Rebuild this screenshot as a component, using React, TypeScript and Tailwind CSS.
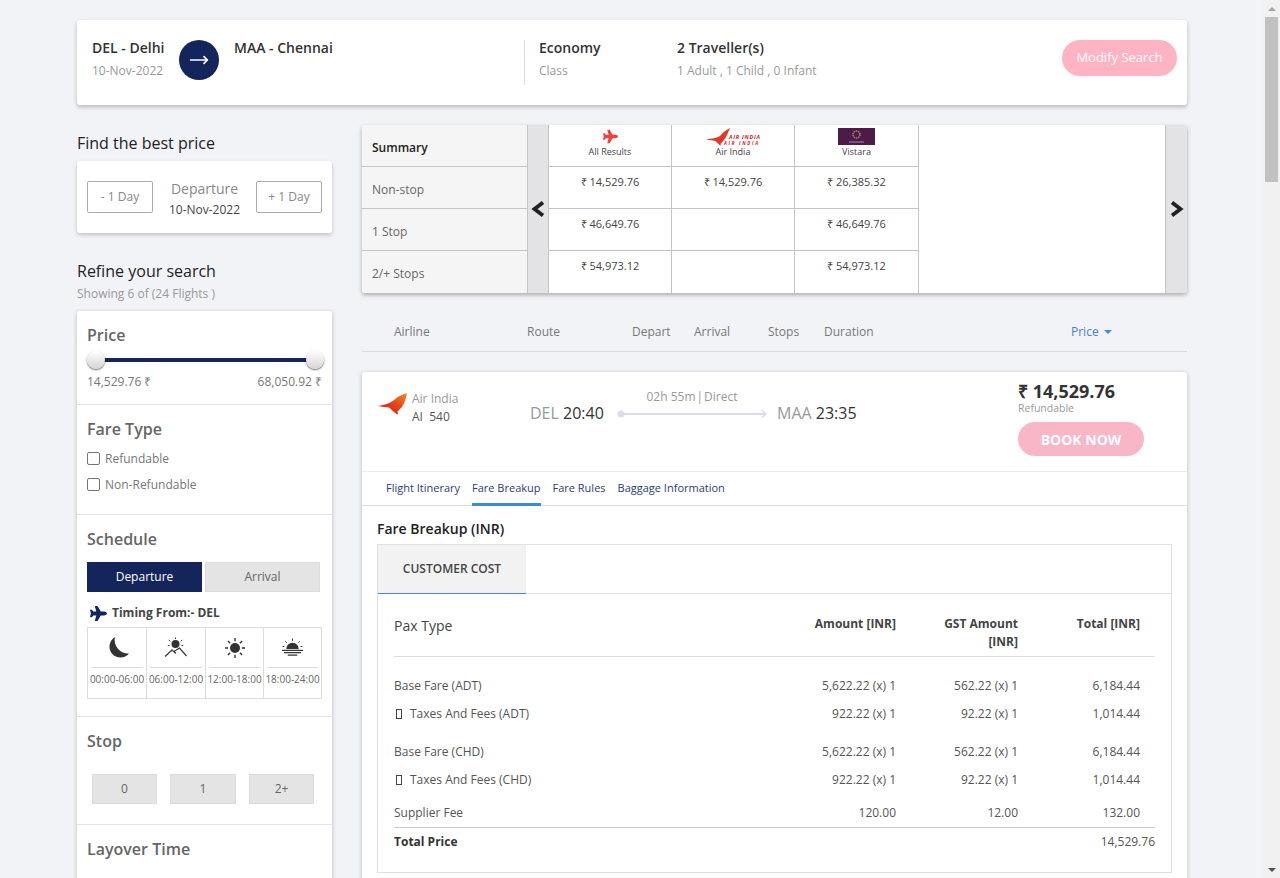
import { MoveRight } from "lucide-react";
import { FaPlane } from "react-icons/fa";

const NAVY = "#13255a";

// logos and small drawings
function SwooshLogo({ className }: { className?: string }) {
  return (
    <svg viewBox="0 0 30 22" className={className}>
      <defs>
        <linearGradient id="swoosh" x1="0" y1="1" x2="1" y2="0">
          <stop offset="0" stopColor="#d2141e" />
          <stop offset="0.55" stopColor="#e8431a" />
          <stop offset="1" stopColor="#f58a1f" />
        </linearGradient>
      </defs>
      <path
        d="M30 0C25 1.500 21 3 17 6.500C13 10 7 12 0 13C4 14 9 14 12 15L15 18L19.500 21.500C20.500 22 21 21 20.500 20C20 19.500 20 18.500 21 18C26 14 28.500 8 30 0Z"
        fill="url(#swoosh)"
      />
    </svg>
  );
}

function AirIndiaWordLogo() {
  return (
    <svg viewBox="0 0 54 18" className="w-[54px] h-[18px]">
      <path d="M24 0C19 3 16 5 14 8C11 10 6 10.500 0 11.500C4 12 8 12.500 10 13.500L14 17.500C15 18 15 17 14.500 16C18 13 21 8 24 0Z" fill="#e2382a" />
      <text x="23" y="11" fontSize="5.500" fontWeight="700" fontStyle="italic" fill="#d3202a" fontFamily="Open Sans, sans-serif" textLength="31">
        AIR INDIA
      </text>
      <text x="18" y="17" fontSize="4.500" fontWeight="700" fontStyle="italic" fill="#d3202a" fontFamily="Open Sans, sans-serif" textLength="34">
        AIR INDIA
      </text>
    </svg>
  );
}

function VistaraLogo() {
  return (
    <svg viewBox="0 0 37 17" className="w-[37px] h-[17px]">
      <rect width="37" height="17" fill="#4d1a4a" />
      <circle cx="18.500" cy="6.500" r="3.500" fill="none" stroke="#a8865a" strokeWidth="1.500" strokeDasharray="1.500 0.700" />
      <rect x="11" y="13.500" width="15" height="1" fill="#a88aa0" />
    </svg>
  );
}

function Moon() {
  return (
    <svg viewBox="0 0 23 22" className="w-[23px] h-[22px]">
      <path d="M9 0A11 11 0 1 0 23 16.500A13.500 13.500 0 0 1 9 0Z" fill="#333" />
    </svg>
  );
}

function SunMountain() {
  return (
    <svg viewBox="0 0 24 22" className="w-[24px] h-[22px]" fill="none" stroke="#333" strokeWidth="1">
      <circle cx="11.500" cy="7" r="4" fill="#333" stroke="none" />
      <path d="M11.500 0.500V2M4.800 3L6.300 4.200M18.200 3L16.700 4.200M3.800 8.500H5.500M19.200 8.500H17.500" />
      <path d="M1 19.500L8 13L12 16.500M10 14.500L15.500 11L22.500 19" strokeWidth="1.200" />
    </svg>
  );
}

function Sun() {
  return (
    <svg viewBox="0 0 22 22" className="w-[20px] h-[20px]" fill="none" stroke="#333" strokeWidth="1.500">
      <circle cx="11" cy="11" r="5.500" fill="#333" stroke="none" />
      <path d="M11 0V3.500M11 18.500V22M0 11H3.500M18.500 11H22M3.200 3.200L5.700 5.700M16.300 16.300L18.800 18.800M18.800 3.200L16.300 5.700M5.700 16.300L3.200 18.800" />
    </svg>
  );
}

function Sunset() {
  return (
    <svg viewBox="0 0 24 20" className="w-[23px] h-[19px]" fill="none" stroke="#333" strokeWidth="1">
      <path d="M5.500 11.500a6.500 6.500 0 0 1 13 0Z" fill="#333" stroke="none" />
      <path d="M12 0.500V3M4.500 3.500L6 5M19.500 3.500L18 5M1.500 9H3.500M20.500 9H22.500" />
      <path d="M1 13H23M3 15.500H21M7 18H17" strokeWidth="1.300" />
    </svg>
  );
}

function RouteLine() {
  return (
    <svg viewBox="0 0 150 10" className="w-[150px] h-[10px] block">
      <circle cx="4" cy="5" r="3.500" fill="#dcdcea" />
      <path d="M4 5H148" stroke="#dcdcea" strokeWidth="2" />
      <path d="M145 1.500L149 5L145 8.500" stroke="#dcdcea" strokeWidth="1.500" fill="none" />
    </svg>
  );
}

function Chevron({ dir }: { dir: "left" | "right" }) {
  return (
    <svg viewBox="0 0 14 16" className="w-[14px] h-4">
      <path d={dir === "left" ? "M12 1.500L3.500 8L12 14.500" : "M2 1.500L10.500 8L2 14.500"} fill="none" stroke="#222" strokeWidth="3.800" />
    </svg>
  );
}

function Scrollbar() {
  return (
    <div className="w-[17px] h-[878px] bg-[#f1f1f1] shrink-0 flex flex-col items-start pl-[2px]">
      <div className="w-[13px] h-[17px] flex items-center justify-center">
        <div className="w-0 h-0 border-x-[4px] border-x-transparent border-b-[4px] border-b-[#a3a3a3]" />
      </div>
      <div className="w-[13px] h-[165px] bg-[#c1c1c1]" />
      <div className="flex-1" />
      <div className="w-[13px] h-[17px] flex items-center justify-center">
        <div className="w-0 h-0 border-x-[4px] border-x-transparent border-t-[4px] border-t-[#505050]" />
      </div>
    </div>
  );
}

function SearchBar() {
  return (
    <div className="h-[85px] bg-white rounded-[3px] shadow-[0_2px_4px_rgba(0,0,0,0.25)] flex items-start pt-5 pl-[15px] pr-[10px]">
      <div className="w-[87px]">
        <div className="text-[14px] leading-4 text-[#333] font-semibold">DEL - Delhi</div>
        <div className="text-[12px] leading-4 mt-[7px] text-[#999]">10-Nov-2022</div>
      </div>
      <div className="w-10 h-10 rounded-full bg-[#13255a] flex items-center justify-center text-white">
        <MoveRight size={20} strokeWidth={2} />
      </div>
      <div className="w-[305px] pl-[15px] text-[14px] leading-4 text-[#333] font-semibold">MAA - Chennai</div>
      <div className="h-[45px] border-l border-[#ddd] pl-[14px] w-[153px]">
        <div className="text-[14px] leading-4 text-[#333] font-semibold">Economy</div>
        <div className="text-[12px] leading-4 mt-[7px] text-[#999]">Class</div>
      </div>
      <div className="flex-1">
        <div className="text-[14px] leading-4 text-[#333] font-semibold">2 Traveller(s)</div>
        <div className="text-[12px] leading-4 mt-[7px] text-[#999]">1 Adult , 1 Child , 0 Infant</div>
      </div>
      <div className="w-[115px] h-9 rounded-full bg-[#ffb3c3] text-white text-[13px] flex items-center justify-center">
        Modify Search
      </div>
    </div>
  );
}

function SectionTitle({ children }: { children: React.ReactNode }) {
  return <div className="text-[16px] leading-6 font-semibold text-[#666]">{children}</div>;
}

function Checkbox({ label }: { label: string }) {
  return (
    <div className="h-[26px] flex items-center gap-[5px]">
      <div className="w-[13px] h-[13px] mb-[2px] border border-[#767676] rounded-[2px] bg-white" />
      <span className="text-[12px] text-[#777]">{label}</span>
    </div>
  );
}

function TimeCell({ icon, label, last }: { icon: React.ReactNode; label: string; last?: boolean }) {
  return (
    <div className={`px-[2px] ${last ? "" : "border-r border-[#ddd]"}`}>
      <div className="h-[40px] flex items-center justify-center border-b border-[#ddd] mx-[1px]">{icon}</div>
      <div className="text-[10px] leading-[22px] text-[#666] text-center whitespace-nowrap -mx-[2px]">{label}</div>
    </div>
  );
}

function Sidebar() {
  return (
    <div className="w-[255px] shrink-0">
      <div className="pt-[6px] text-[16px] leading-6 text-[#222]">Find the best price</div>
      <div className="mt-[6px] h-[72px] bg-white rounded-[3px] shadow-[0_2px_4px_rgba(0,0,0,0.2)] flex items-center px-[10px]">
        <div className="w-[66px] h-8 border border-[#aaa] rounded-[2px] text-[12px] text-[#888] flex items-center justify-center">- 1 Day</div>
        <div className="flex-1 text-center pt-1">
          <div className="text-[14px] leading-5 text-[#888]">Departure</div>
          <div className="text-[12px] leading-[21px] text-[#444]">10-Nov-2022</div>
        </div>
        <div className="w-[66px] h-8 border border-[#aaa] rounded-[2px] text-[12px] text-[#888] flex items-center justify-center">+ 1 Day</div>
      </div>

      <div className="mt-[26px] text-[16px] leading-6 text-[#222]">Refine your search</div>
      <div className="mt-[3px] text-[12px] leading-4 text-[#999]">Showing 6 of (24 Flights )</div>

      <div className="mt-[9px] bg-white rounded-t-[3px] shadow-[0_1px_4px_rgba(0,0,0,0.25)] h-[700px]">
        <div className="h-[94px] border-b border-[#e3e3e8] px-[10px] pt-3">
          <SectionTitle>Price</SectionTitle>
          <div className="relative h-[20px] mt-[3px] flex items-center px-[9px]">
            <div className="h-1 w-full bg-[#13255a]" />
            <div className="absolute left-0 top-0 w-[18px] h-[18px] rounded-full bg-gradient-to-b from-white to-[#d5d5d5] shadow-[0_1px_2px_rgba(0,0,0,0.6)] translate-y-[1px]" />
            <div className="absolute right-[-2px] top-0 w-[18px] h-[18px] rounded-full bg-gradient-to-b from-white to-[#d5d5d5] shadow-[0_1px_2px_rgba(0,0,0,0.6)] translate-y-[1px]" />
          </div>
          <div className="mt-[4px] flex justify-between text-[12px] leading-4 text-[#777]">
            <span>14,529.76 ₹</span>
            <span>68,050.92 ₹</span>
          </div>
        </div>

        <div className="h-[110px] border-b border-[#e3e3e8] px-[10px] pt-3">
          <SectionTitle>Fare Type</SectionTitle>
          <div className="mt-[5px]">
            <Checkbox label="Refundable" />
            <Checkbox label="Non-Refundable" />
          </div>
        </div>

        <div className="h-[202px] border-b border-[#e3e3e8] px-[10px] pt-3">
          <SectionTitle>Schedule</SectionTitle>
          <div className="mt-[11px] flex gap-[3px]">
            <div className="w-[115px] h-[30px] bg-[#13255a] text-white text-[12px] flex items-center justify-center">Departure</div>
            <div className="w-[115px] h-[30px] bg-[#e4e4e4] border border-[#dcdcdc] text-[#666] text-[12px] flex items-center justify-center">Arrival</div>
          </div>
          <div className="mt-[11px] h-5 flex items-center pl-[3px] gap-[5px]">
            <FaPlane size={17} color={NAVY} />
            <span className="text-[12px] font-bold text-[#444]">Timing From:- DEL</span>
          </div>
          <div className="mt-1 w-[235px] h-[72px] border border-[#ddd] grid grid-cols-[59px_59px_58px_57px]">
            <TimeCell icon={<Moon />} label="00:00-06:00" />
            <TimeCell icon={<SunMountain />} label="06:00-12:00" />
            <TimeCell icon={<Sun />} label="12:00-18:00" />
            <TimeCell icon={<Sunset />} label="18:00-24:00" last />
          </div>
        </div>

        <div className="h-[108px] border-b border-[#e3e3e8] px-[10px] pt-3">
          <SectionTitle>Stop</SectionTitle>
          <div className="mt-[21px] flex pl-[5px] text-[12px] text-[#666]">
            <div className="w-[65px] h-[30px] bg-[#e4e4e4] border border-[#dcdcdc] flex items-center justify-center">0</div>
            <div className="w-[66px] h-[30px] ml-[13px] bg-[#e4e4e4] border border-[#dcdcdc] flex items-center justify-center">1</div>
            <div className="w-[65px] h-[30px] ml-[13px] bg-[#e4e4e4] border border-[#dcdcdc] flex items-center justify-center">2+</div>
          </div>
        </div>

        <div className="px-[10px] pt-3">
          <SectionTitle>Layover Time</SectionTitle>
        </div>
      </div>
    </div>
  );
}

const summaryColumns = [
  { width: "w-[123px]", prices: ["₹ 14,529.76", "₹ 46,649.76", "₹ 54,973.12"] },
  { width: "w-[123px]", prices: ["₹ 14,529.76", "", ""] },
  { width: "w-[124px]", prices: ["₹ 26,385.32", "₹ 46,649.76", "₹ 54,973.12"] },
];

function SummaryTable() {
  const logos = [
    <div key="all" className="h-[41px] flex flex-col items-center pt-1">
      <FaPlane size={15} color="#f0413a" />
      <span className="text-[9px] leading-3 mt-[2px] text-[#444]">All Results</span>
    </div>,
    <div key="ai" className="h-[41px] flex flex-col items-center pt-[3px]">
      <AirIndiaWordLogo />
      <span className="text-[9px] leading-3 text-[#444]">Air India</span>
    </div>,
    <div key="vi" className="h-[41px] flex flex-col items-center pt-[3px]">
      <VistaraLogo />
      <span className="text-[9px] leading-3 mt-[1px] text-[#444]">Vistara</span>
    </div>,
  ];
  return (
    <div className="h-[168px] flex bg-white rounded-[3px] shadow-[0_2px_4px_rgba(0,0,0,0.3)] overflow-hidden">
      <div className="w-[166px] bg-[#f5f5f5] border-r border-[#c4c4c4] text-[12px] text-[#666]">
        <div className="h-[42px] border-b border-[#c4c4c4] pl-[10px] flex items-center pt-[4px] font-semibold text-[#222]">Summary</div>
        <div className="h-[42px] border-b border-[#c4c4c4] pl-[10px] flex items-center pt-[4px]">Non-stop</div>
        <div className="h-[42px] border-b border-[#c4c4c4] pl-[10px] flex items-center pt-[4px]">1 Stop</div>
        <div className="h-[42px] pl-[10px] flex items-center pt-[4px]">2/+ Stops</div>
      </div>
      <div className="w-[21px] bg-[#e3e3e5] border-r border-[#c4c4c4] flex items-center justify-center">
        <Chevron dir="left" />
      </div>
      {summaryColumns.map((col, i) => (
        <div key={i} className={`${col.width} border-r border-[#c4c4c4]`}>
          <div className="border-b border-[#c4c4c4]">{logos[i]}</div>
          {col.prices.map((p, j) => (
            <div key={j} className={`h-[42px] text-center text-[11px] leading-[16px] pt-[7px] text-[#444] ${j < 2 ? "border-b border-[#c4c4c4]" : ""}`}>
              {p}
            </div>
          ))}
        </div>
      ))}
      <div className="flex-1 bg-white" />
      <div className="w-[22px] bg-[#e3e3e5] border-l border-[#c4c4c4] flex items-center justify-center">
        <Chevron dir="right" />
      </div>
    </div>
  );
}

function SortRow() {
  return (
    <div className="h-[59px] border-b border-[#d9dade] pt-[30px] pl-[32px] flex items-start text-[12px] leading-[18px] text-[#777]">
      <span className="w-[133px]">Airline</span>
      <span className="w-[105px]">Route</span>
      <span className="w-[62px]">Depart</span>
      <span className="w-[74px]">Arrival</span>
      <span className="w-[56px]">Stops</span>
      <span className="w-[247px]">Duration</span>
      <span className="text-[#4a7fd8] flex items-center gap-[5px]">
        Price
        <span className="w-0 h-0 border-x-[4px] border-x-transparent border-t-[4px] border-t-[#3b8de0]" />
      </span>
    </div>
  );
}

function FlightSummary() {
  return (
    <div className="h-[100px] border-b border-[#ececf0] flex items-start">
      <div className="w-[168px] pl-[16px] pt-[21px] flex gap-[5px]">
        <SwooshLogo className="w-[29px] h-[22px]" />
        <div className="-mt-[3px]">
          <div className="text-[12px] leading-[18px] text-[#999]">Air India</div>
          <div className="text-[12px] leading-[17px] text-[#555]">AI&nbsp; 540</div>
        </div>
      </div>
      <div className="w-[87px] pt-[31px] text-[16px] leading-5 text-[#333] whitespace-nowrap">
        <span className="text-[#999]">DEL</span> 20:40
      </div>
      <div className="w-[160px] pt-4">
        <div className="w-[150px] text-center text-[12px] leading-[18px] text-[#999]">
          02h 55m<span className="px-[1px]">|</span>Direct
        </div>
        <div className="mt-[3px]">
          <RouteLine />
        </div>
      </div>
      <div className="w-[241px] pt-[31px] text-[16px] leading-5 text-[#333] whitespace-nowrap">
        <span className="text-[#999]">MAA</span> 23:35
      </div>
      <div className="pt-[8px]">
        <div className="text-[18px] leading-[22px] font-bold text-[#333]">₹ 14,529.76</div>
        <div className="text-[10.500px] leading-3 text-[#999]">Refundable</div>
        <div className="mt-2 w-[126px] h-[34px] rounded-full bg-[#f9b6c6] text-white text-[14px] font-bold flex items-center justify-center">
          BOOK NOW
        </div>
      </div>
    </div>
  );
}

function DetailTabs() {
  return (
    <div className="h-[34px] border-b border-[#dedee2] pl-[24px] flex gap-3 text-[11px] text-[#2c3e6f]">
      <div className="h-[33px] flex items-center">Flight Itinerary</div>
      <div className="h-[34px] pt-[2px] flex items-center border-b-[3px] border-[#3a8ae0]">Fare Breakup</div>
      <div className="h-[33px] flex items-center">Fare Rules</div>
      <div className="h-[33px] flex items-center">Baggage Information</div>
    </div>
  );
}

const fareRowClass = "grid grid-cols-[380px_122px_122px_122px_15px] h-7 items-center text-[12px] text-[#555]";

function FareRow({ label, amount, gst, total, tax, className }: { label: string; amount: string; gst: string; total: string; tax?: boolean; className?: string }) {
  return (
    <div className={`${fareRowClass} ${className ?? ""}`}>
      <div className="flex items-center">
        {tax && <span className="inline-block w-[6px] h-[10px] border border-[#444] ml-[2px] mr-2" />}
        {label}
      </div>
      <div className="text-right">{amount}</div>
      <div className="text-right">{gst}</div>
      <div className="text-right">{total}</div>
    </div>
  );
}

function FareBreakup() {
  return (
    <div className="px-[15px] pt-[13px]">
      <div className="text-[14px] leading-5 font-semibold text-[#222]">Fare Breakup (INR)</div>
      <div className="mt-[5px] h-[329px] border border-[#e0e0e0]">
        <div className="h-[49px] border-b border-[#e0e0e0]">
          <div className="w-[148px] h-[48px] bg-[#f2f2f2] text-[12px] font-semibold text-[#444] flex items-center justify-center">
            CUSTOMER COST
          </div>
          <div className="w-[148px] h-px bg-[#3a8ae0]" />
        </div>
        <div className="px-4">
          <div className="h-[63px] border-b border-[#ddd] grid grid-cols-[380px_122px_122px_122px_15px] text-[12px] leading-[18px] font-bold text-[#444]">
            <div className="pt-[22px] text-[14px] leading-5 font-medium">Pax Type</div>
            <div className="pt-[21px] text-right">Amount [INR]</div>
            <div className="pt-[21px] text-right">
              GST Amount
              <br />
              [INR]
            </div>
            <div className="pt-[21px] text-right">Total [INR]</div>
          </div>
          <div className="pt-[15px]">
            <FareRow label="Base Fare (ADT)" amount="5,622.22 (x) 1" gst="562.22 (x) 1" total="6,184.44" />
            <FareRow tax label="Taxes And Fees (ADT)" amount="922.22 (x) 1" gst="92.22 (x) 1" total="1,014.44" />
            <FareRow className="mt-[10px]" label="Base Fare (CHD)" amount="5,622.22 (x) 1" gst="562.22 (x) 1" total="6,184.44" />
            <FareRow tax label="Taxes And Fees (CHD)" amount="922.22 (x) 1" gst="92.22 (x) 1" total="1,014.44" />
            <FareRow className="mt-[5px]" label="Supplier Fee" amount="120.00" gst="12.00" total="132.00" />
          </div>
          <div className="border-t border-[#ccc] h-[28px] flex items-center justify-between text-[12px]">
            <span className="font-bold text-[#333]">Total Price</span>
            <span className="text-[#555]">14,529.76</span>
          </div>
        </div>
      </div>
    </div>
  );
}

export default function App() {
  return (
    <div className="h-[878px] overflow-hidden flex bg-[#f2f3f7] font-['Open_Sans',sans-serif]">
      <div className="flex-1 min-w-0 pl-[77px] pt-5">
        <div className="w-[1110px]">
          <SearchBar />
          <div className="mt-5 flex gap-[30px]">
            <Sidebar />
            <div className="w-[825px]">
              <SummaryTable />
              <SortRow />
              <div className="mt-5 bg-white rounded-t-[3px] shadow-[0_1px_4px_rgba(0,0,0,0.25)] h-[600px]">
                <FlightSummary />
                <DetailTabs />
                <FareBreakup />
              </div>
            </div>
          </div>
        </div>
      </div>
      <Scrollbar />
    </div>
  );
}
